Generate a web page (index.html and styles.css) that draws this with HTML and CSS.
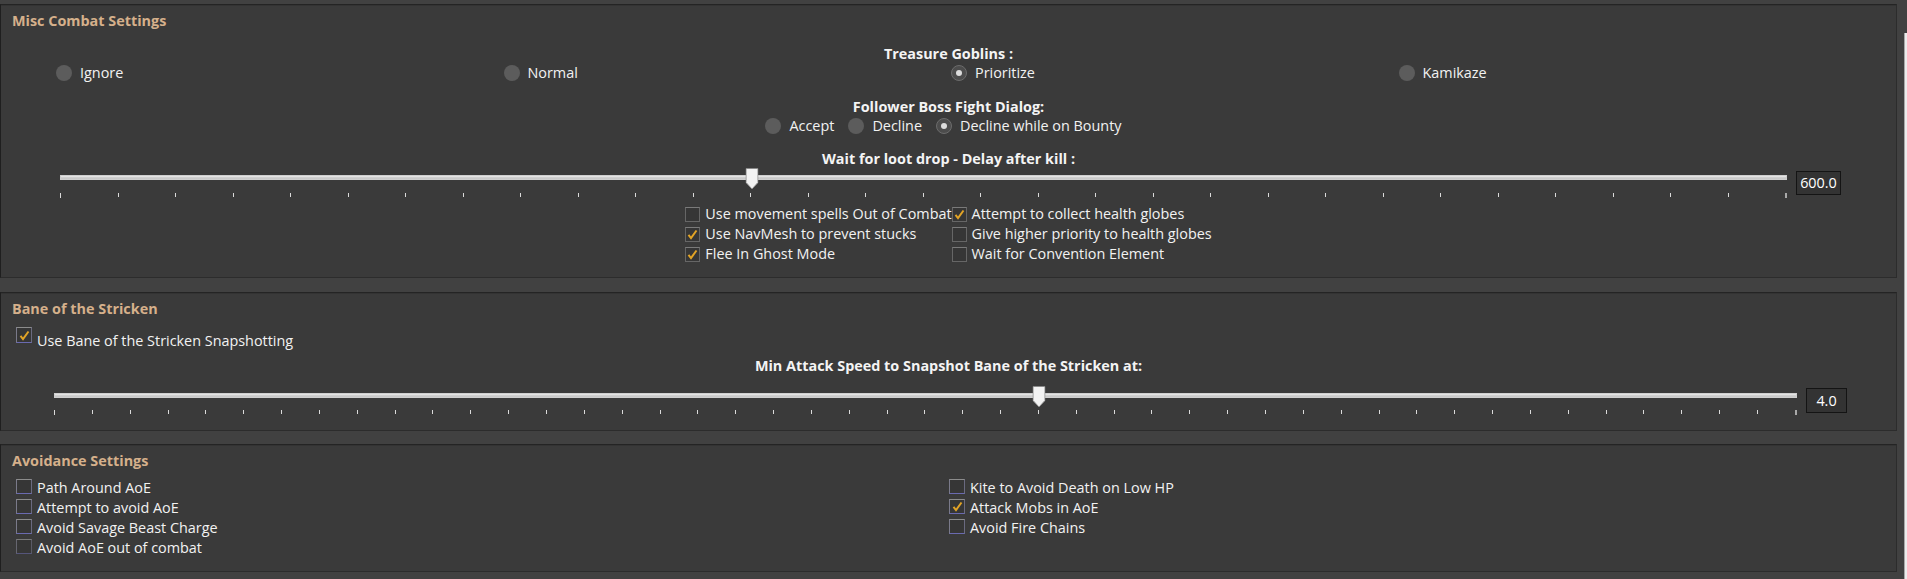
FILE: index.html
```html
<!DOCTYPE html>
<html>
<head>
<meta charset="utf-8">
<title>Combat Settings</title>
<link rel="stylesheet" href="styles.css">
</head>
<body>
<div class="app">
  <div class="panels">
    <section class="panel panel-misc">
      <h2 class="panel-title">Misc Combat Settings</h2>
      <div class="field-label label-goblins">Treasure Goblins :</div>
      <div class="radio-grid">
        <label class="radio"><span class="radio-dot"></span><span>Ignore</span></label>
        <label class="radio"><span class="radio-dot"></span><span>Normal</span></label>
        <label class="radio"><span class="radio-dot is-on"></span><span>Prioritize</span></label>
        <label class="radio"><span class="radio-dot"></span><span>Kamikaze</span></label>
      </div>
      <div class="field-label label-follower">Follower Boss Fight Dialog:</div>
      <div class="radio-row">
        <label class="radio"><span class="radio-dot"></span><span>Accept</span></label>
        <label class="radio"><span class="radio-dot"></span><span>Decline</span></label>
        <label class="radio"><span class="radio-dot is-on"></span><span>Decline while on Bounty</span></label>
      </div>
      <div class="field-label label-loot">Wait for loot drop - Delay after kill :</div>
      <div class="slider slider-loot">
        <div class="slider-body">
          <div class="track">
            <svg class="thumb" style="left:40.05%" width="13" height="22" viewBox="0 0 13 22"><path d="M0.5 0.5 H12.5 V14.5 L6.5 21 L0.5 14.5 Z" fill="#f3f3f3" stroke="#8a8a8a"/></svg>
          </div>
          <div class="ticks">
            <i class="tick-first"></i><i></i><i></i><i></i><i></i><i></i><i></i><i></i><i></i><i></i>
            <i></i><i></i><i></i><i></i><i></i><i></i><i></i><i></i><i></i><i></i>
            <i></i><i></i><i></i><i></i><i></i><i></i><i></i><i></i><i></i><i></i>
            <i class="tick-last"></i>
          </div>
        </div>
        <div class="value-box value-loot">600.0</div>
      </div>
      <div class="check-grid">
        <div class="check"><span class="check-box"></span><span class="check-text">Use movement spells Out of Combat</span></div>
        <div class="check"><span class="check-box"><svg width="13" height="13" viewBox="0 0 13 13"><path d="M2.5 6.8 L5 10 L10.5 2.5" fill="none" stroke="#e2a426" stroke-width="2"/></svg></span><span class="check-text">Attempt to collect health globes</span></div>
        <div class="check"><span class="check-box"><svg width="13" height="13" viewBox="0 0 13 13"><path d="M2.5 6.8 L5 10 L10.5 2.5" fill="none" stroke="#e2a426" stroke-width="2"/></svg></span><span class="check-text">Use NavMesh to prevent stucks</span></div>
        <div class="check"><span class="check-box"></span><span class="check-text">Give higher priority to health globes</span></div>
        <div class="check"><span class="check-box"><svg width="13" height="13" viewBox="0 0 13 13"><path d="M2.5 6.8 L5 10 L10.5 2.5" fill="none" stroke="#e2a426" stroke-width="2"/></svg></span><span class="check-text">Flee In Ghost Mode</span></div>
        <div class="check"><span class="check-box"></span><span class="check-text">Wait for Convention Element</span></div>
      </div>
    </section>

    <section class="panel panel-bane">
      <h2 class="panel-title">Bane of the Stricken</h2>
      <div class="check check-bane"><span class="check-box box-blue"><svg width="13" height="13" viewBox="0 0 13 13"><path d="M2.5 6.8 L5 10 L10.5 2.5" fill="none" stroke="#e2a426" stroke-width="2"/></svg></span><span class="check-text">Use Bane of the Stricken Snapshotting</span></div>
      <div class="field-label label-attack">Min Attack Speed to Snapshot Bane of the Stricken at:</div>
      <div class="slider slider-attack">
        <div class="slider-body">
          <div class="track">
            <svg class="thumb" style="left:56.5%" width="13" height="22" viewBox="0 0 13 22"><path d="M0.5 0.5 H12.5 V14.5 L6.5 21 L0.5 14.5 Z" fill="#f3f3f3" stroke="#8a8a8a"/></svg>
          </div>
          <div class="ticks">
            <i class="tick-first"></i><i></i><i></i><i></i><i></i><i></i><i></i><i></i><i></i><i></i>
            <i></i><i></i><i></i><i></i><i></i><i></i><i></i><i></i><i></i><i></i>
            <i></i><i></i><i></i><i></i><i></i><i></i><i></i><i></i><i></i><i></i>
            <i></i><i></i><i></i><i></i><i></i><i></i><i></i><i></i><i></i><i></i>
            <i></i><i></i><i></i><i></i><i></i><i></i>
            <i class="tick-last"></i>
          </div>
        </div>
        <div class="value-box value-attack">4.0</div>
      </div>
    </section>

    <section class="panel panel-avoid">
      <h2 class="panel-title">Avoidance Settings</h2>
      <div class="avoid-grid">
        <div class="avoid-col">
          <div class="check check-avoid"><span class="check-box box-blue"></span><span class="check-text">Path Around AoE</span></div>
          <div class="check check-avoid"><span class="check-box box-blue"></span><span class="check-text">Attempt to avoid AoE</span></div>
          <div class="check check-avoid"><span class="check-box box-blue"></span><span class="check-text">Avoid Savage Beast Charge</span></div>
          <div class="check check-avoid"><span class="check-box box-faded"></span><span class="check-text">Avoid AoE out of combat</span></div>
        </div>
        <div class="avoid-col">
          <div class="check check-avoid"><span class="check-box box-blue"></span><span class="check-text">Kite to Avoid Death on Low HP</span></div>
          <div class="check check-avoid"><span class="check-box box-blue"><svg width="13" height="13" viewBox="0 0 13 13"><path d="M2.5 6.8 L5 10 L10.5 2.5" fill="none" stroke="#e2a426" stroke-width="2"/></svg></span><span class="check-text">Attack Mobs in AoE</span></div>
          <div class="check check-avoid"><span class="check-box box-blue"></span><span class="check-text">Avoid Fire Chains</span></div>
        </div>
      </div>
    </section>
  </div>
  <div class="scrollbar"></div>
</div>
</body>
</html>
```

FILE: styles.css
```css
* { box-sizing: border-box; }

html, body {
  margin: 0;
  padding: 0;
}

body {
  width: 1907px;
  height: 579px;
  overflow: hidden;
  background: #414141;
  font-family: "Open Sans", "Noto Sans", sans-serif;
  font-size: 14.4px;
  color: #f2f2f2;
}

.app {
  display: flex;
  align-items: flex-start;
  padding-top: 4px;
  height: 579px;
}

.panels {
  width: 1897px;
  display: flex;
  flex-direction: column;
}

.scrollbar {
  width: 3px;
  margin-left: 7px;
  margin-top: 29px;
  height: 560px;
  background: #ececec;
  border-left: 1px solid #a8a8a8;
}

.panel {
  background: #3a3a3a;
  border: 1px solid #2c2c2c;
  border-top-color: #242424;
  border-left-color: #1f1f1f;
  box-shadow: inset 0 1px 0 #333;
}

.panel-misc { height: 274px; }
.panel-bane { height: 139px; margin-top: 14px; }
.panel-avoid { height: 128px; margin-top: 13px; }

.panel-title {
  margin: 0;
  padding: 6px 0 0 11px;
  font-size: 14.4px;
  font-weight: 700;
  line-height: 20px;
  color: #d5b08b;
}

.field-label {
  text-align: center;
  font-weight: 700;
  line-height: 20px;
  color: #f4f4f4;
}

.label-goblins { margin-top: 13px; }
.label-follower { margin-top: 14px; }
.label-loot { margin-top: 13px; }
.label-attack { margin-top: 9px; }

.radio {
  display: flex;
  align-items: center;
  gap: 8px;
  line-height: 20px;
  height: 20px;
}

.radio-dot {
  flex: none;
  width: 16px;
  height: 16px;
  border-radius: 50%;
  background: #5c5c5c;
  display: flex;
  align-items: center;
  justify-content: center;
}

.radio-dot.is-on {
  background: #4c4c4c;
  border: 1px solid #6c6c6c;
}

.radio-dot.is-on::after {
  content: "";
  width: 6px;
  height: 6px;
  border-radius: 50%;
  background: #dcdcdc;
}

.radio-grid {
  display: grid;
  grid-template-columns: repeat(4, 1fr);
  padding: 0 50px 0 55px;
  margin-top: -1px;
}

.radio-row {
  display: flex;
  justify-content: center;
  gap: 14px;
  padding-right: 10px;
  margin-top: -1px;
}

.slider {
  display: flex;
  align-items: flex-start;
}

.slider-loot { padding: 0 55px 0 59px; margin-top: -1px; }
.slider-attack { padding: 0 49px 0 53px; margin-top: 10px; }

.slider-body {
  flex: 1;
  padding-top: 7px;
}

.track {
  position: relative;
  height: 5px;
  background: linear-gradient(#e4e4e4 0, #e4e4e4 1px, #bdbdbd 2px, #d6d6d6 3px, #ececec 4px);
  border: 1px solid #cfcfcf;
}

.thumb {
  position: absolute;
  top: -8px;
  transform: translateX(-50%);
}

.ticks {
  display: flex;
  justify-content: space-between;
  align-items: flex-start;
  margin-top: 13px;
  height: 6px;
}

.slider-attack .ticks { margin-top: 12px; }

.ticks i {
  display: block;
  width: 1px;
  height: 4px;
  background: #dadada;
}

.ticks i.tick-first { height: 5px; }
.ticks i.tick-last { width: 2px; height: 5px; background: #a9a9a9; }

.value-box {
  flex: none;
  border: 1px solid #141414;
  background: #333333;
  color: #ffffff;
  text-align: center;
}

.value-loot {
  width: 45px;
  height: 24px;
  line-height: 22px;
  margin: 3px 0 0 9px;
}

.value-attack {
  width: 41px;
  height: 25px;
  line-height: 23px;
  margin: 2px 0 0 9px;
}

.check-grid {
  display: grid;
  grid-template-columns: auto auto;
  justify-content: center;
  margin-top: 5px;
}

.check {
  display: flex;
  align-items: flex-start;
  gap: 5px;
  height: 20px;
}

.check-box {
  flex: none;
  width: 15px;
  height: 15px;
  margin-top: 3px;
  border: 1px solid #666;
  border-top-color: #7a7a7a;
  background: #363636;
  display: flex;
  align-items: center;
  justify-content: center;
}

.check-box.box-blue {
  border-color: #8c8c8c #6a6a80 #6a6ab0 #7a7a8a;
}

.check-box.box-faded {
  border-color: #7a7a7a #5a5a66 #55557a #666670;
}

.check-text {
  line-height: 20px;
  white-space: nowrap;
}

.check-bane {
  margin: 8px 0 0 15px;
}

.check-bane .check-box { margin-top: 0; width: 16px; height: 16px; }
.check-bane .check-text { margin-top: 4px; }

.avoid-grid {
  display: grid;
  grid-template-columns: 1fr 1fr;
  padding: 0 14px 0 15px;
  margin-top: 7px;
}

.check-avoid .check-box { margin-top: 1px; width: 16px; }
```
